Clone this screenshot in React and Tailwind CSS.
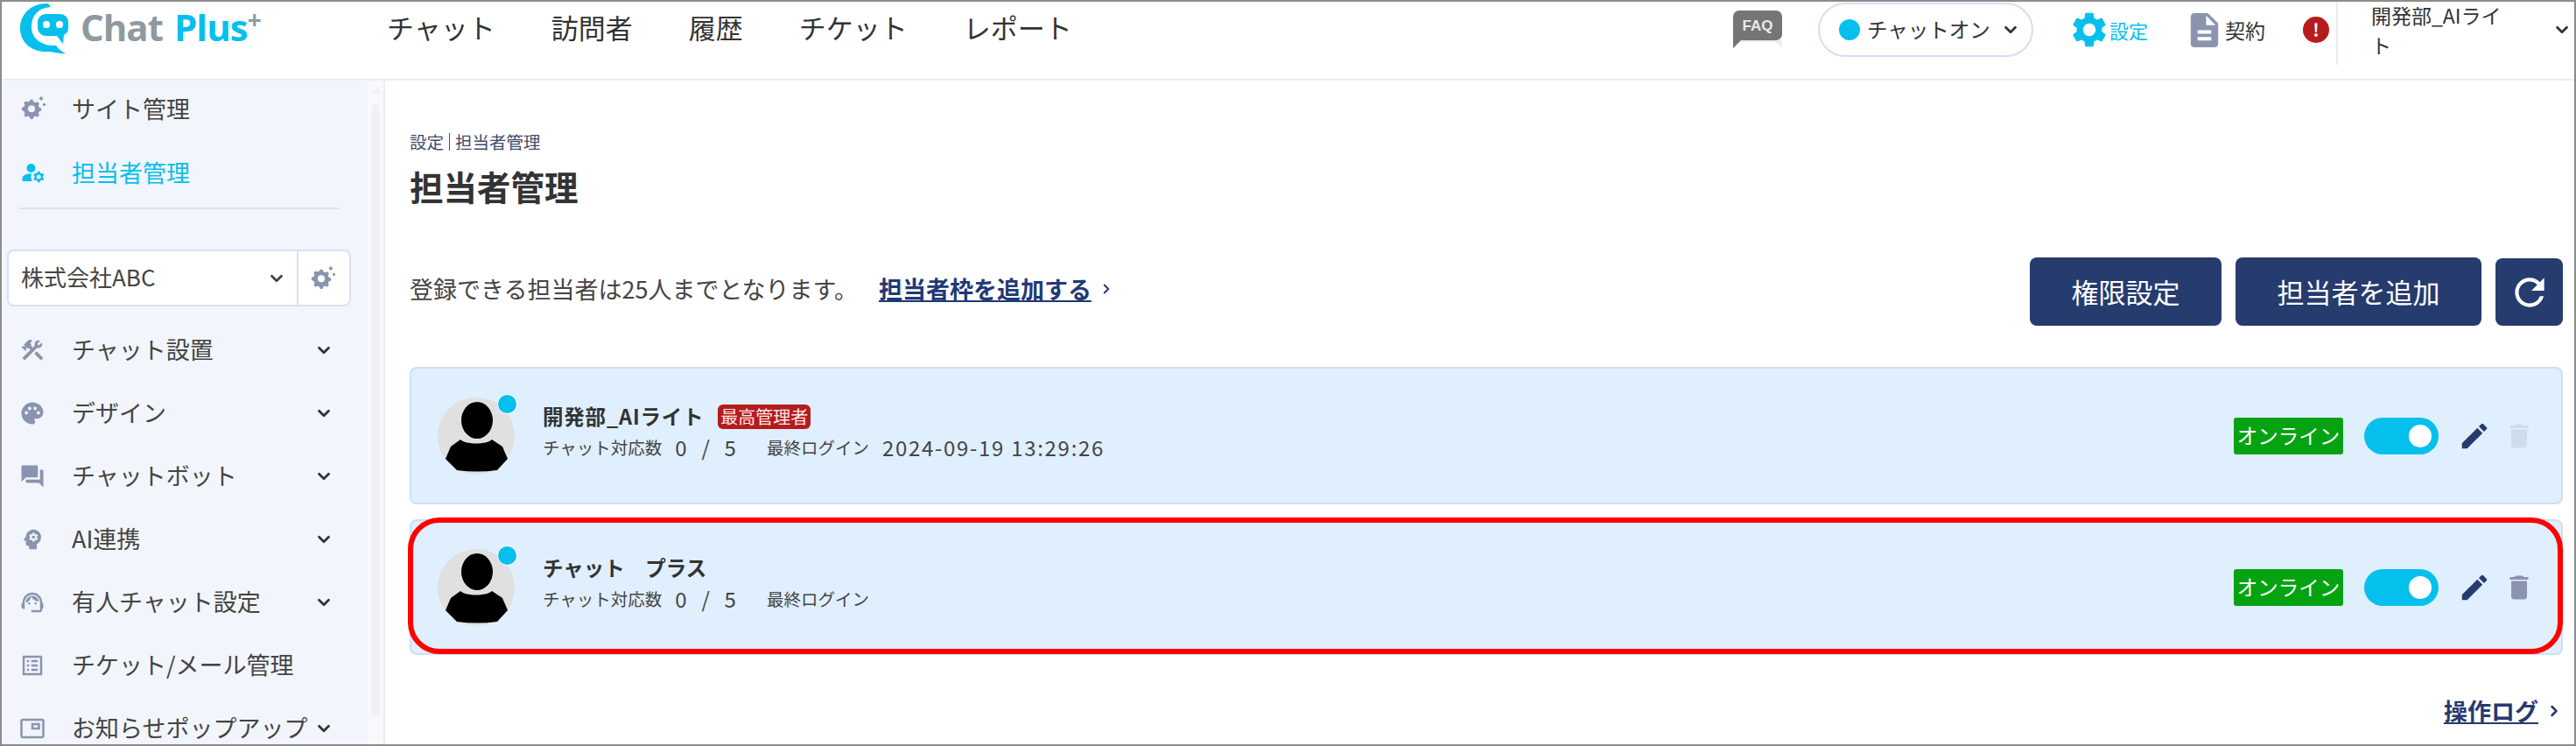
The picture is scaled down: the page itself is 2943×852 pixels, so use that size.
import { ChevronDown, ChevronRight } from 'lucide-react';
import {
  MdConstruction,
  MdPalette,
  MdForum,
  MdPsychology,
  MdSupportAgent,
  MdOutlineListAlt,
  MdOutlinePictureInPicture,
  MdManageAccounts,
  MdSettings,
  MdDescription,
  MdEdit,
  MdDelete,
  MdRefresh,
} from 'react-icons/md';

const NAV = ['チャット', '訪問者', '履歴', 'チケット', 'レポート'];

const MENU = [
  { label: 'チャット設置', Icon: MdConstruction, arrow: true },
  { label: 'デザイン', Icon: MdPalette, arrow: true },
  { label: 'チャットボット', Icon: MdForum, arrow: true },
  { label: 'AI連携', Icon: MdPsychology, arrow: true },
  { label: '有人チャット設定', Icon: MdSupportAgent, arrow: true },
  { label: 'チケット/メール管理', Icon: MdOutlineListAlt },
  { label: 'お知らせポップアップ', Icon: MdOutlinePictureInPicture, arrow: true },
];

function Logo() {
  return (
    <svg width="60" height="64" viewBox="0 0 60 64" className="shrink-0">
      <path
        d="M33 2C14 1 1 14 1 30c0 17 14 28 31 27 6 0 14 3 21 2-6-3-9-6-11-9-12 1-28-5-28-21C14 15 22 7 36 6Z"
        fill="#05c0ec"
      />
      <path d="M30 14h17a9 9 0 0 1 9 9v7a9 9 0 0 1-5 8l-1 10-7-9H30a9 9 0 0 1-9-9v-7a9 9 0 0 1 9-9Z" fill="#05c0ec" />
      <rect x="27" y="22" width="8" height="8" rx="3.5" fill="#fff" />
      <rect x="42" y="22" width="8" height="8" rx="3.5" fill="#fff" />
    </svg>
  );
}

function GearIcon({ className }) {
  return (
    <svg width="30" height="30" viewBox="0 0 30 30" className={className}>
      <g fill="#8a94b0">
        <path d="M11 6.500l2.600.4.8 2.400 2.300 1 2.200-1.100 2 2-1.100 2.200 1 2.300 2.400.8v2.900l-2.400.8-1 2.300 1.100 2.200-2 2-2.200-1.100-2.300 1-.8 2.400h-2.900l-.8-2.400-2.300-1-2.200 1.100-2-2 1.100-2.200-1-2.300L1 18.700v-2.900l2.400-.8 1-2.300L3.300 10.500l2-2 2.200 1.100 2.300-1Zm1 6.800a4 4 0 1 0 0 8 4 4 0 0 0 0-8Z" fillRule="evenodd" transform="translate(0 -2)" />
        <path d="M23 1l2.500 2.500L23 6l-2.500-2.500Z" />
        <path d="M26.500 8.500l2 2-2 2-2-2Z" />
      </g>
    </svg>
  );
}

function Avatar() {
  return (
    <div className="relative h-[88px] w-[88px] shrink-0 rounded-full bg-[#e0e0e0]">
      <svg width="88" height="88" viewBox="0 0 88 88">
        <ellipse cx="45" cy="26" rx="18" ry="21" fill="#000" />
        <path d="M26 48C32 54 56 54 62 48L74 56 80 70 68 83Q45 86 22 83L9 70 15 56Z" fill="#000" />
      </svg>
      <span className="absolute -top-[3px] left-[69px] h-[21px] w-[21px] rounded-full bg-[#05c0ec] ring-1 ring-white/70" />
    </div>
  );
}

function OperatorCard({ name, nameClass, badge, login, trashClass, height, highlight }) {
  return (
    <div className={`relative flex items-center rounded-lg border-2 border-[#cfdff0] bg-[#e0effd] pl-[30px] pr-[30px] ${height}`}>
      <Avatar />
      <div className="ml-[32px] -mt-[8px]">
        <div className="flex h-[35px] items-center text-[23.5px] font-bold text-[#333]">
          <span className={nameClass}>{name}</span>
          {badge && (
            <span className="ml-[16px] flex h-[28px] w-[106px] items-center justify-center rounded-md bg-[#b31d1d] text-[20px] font-normal text-[#fde8e8]">
              {badge}
            </span>
          )}
        </div>
        <div className="flex h-[35px] items-center text-[19.5px] text-[#444]">
          <span>チャット対応数</span>
          <span className="ml-[15px] text-[24px] tracking-[2px] whitespace-pre">0  /  5</span>
          <span className="ml-[33px]">最終ログイン</span>
          {login && <span className="ml-[15px] text-[24px] tracking-[1.7px]">{login}</span>}
        </div>
      </div>
      <div className="ml-auto flex items-center">
        <span className="flex h-[42px] w-[125px] items-center justify-center rounded-[3px] bg-[#05a312] text-[23.5px] text-white">
          オンライン
        </span>
        <span className="ml-[24px] flex h-[42px] w-[85px] items-center justify-end rounded-full bg-[#05c0ec] pr-[8px]">
          <span className="h-[26px] w-[26px] rounded-full bg-white" />
        </span>
        <MdEdit size={38} className="ml-[22px] text-[#263b6e]" />
        <MdDelete size={36} className={`ml-[14px] ${trashClass}`} />
      </div>
      {highlight && (
        <div className="pointer-events-none absolute -top-[4px] -bottom-[1px] -left-[4px] -right-[2px] rounded-[36px] border-[6px] border-[#fe0000]" />
      )}
    </div>
  );
}

export default function App() {
  return (
    <div className="h-[852px] w-[2943px] overflow-hidden border-2 border-[#8c8c8c] bg-white font-['Noto_Sans_CJK_JP','Noto_Sans_CJK_SC',sans-serif] text-[#333]">
      {/* Header */}
      <header className="h-[90px] border-b-2 border-[#e8edf6]">
        <div className="flex h-[64px] items-center">
          <div className="ml-[20px]">
            <Logo />
          </div>
          <div className="ml-[10px] -mt-[6px] flex w-[200px] shrink-0 items-start font-['Open_Sans',sans-serif] text-[42px] leading-none font-bold tracking-[-1px]">
            <span className="text-[#8e9aa0]">Chat</span>
            <span className="ml-[13px] text-[#05c0ec]">Plus</span>
            <span className="text-[28px] leading-[24px] text-[#8e9aa0]">+</span>
          </div>
          <nav className="ml-[150px] -mt-[5px] flex gap-[64px] text-[31px] text-[#333]">
            {NAV.map(n => (
              <span key={n}>{n}</span>
            ))}
          </nav>

          <div className="ml-auto flex items-center">
            <svg width="58" height="44" viewBox="0 0 58 44" className="shrink-0">
              <path d="M2 34L57 34 57 43 50 36 8 36 2 43Z" fill="#efeee6" />
              <path d="M8 0h42a7 7 0 0 1 7 7v20a7 7 0 0 1-7 7H10l-9 9V7a7 7 0 0 1 7-7Z" fill="#757575" />
              <text x="29" y="23" textAnchor="middle" fontSize="17" fontWeight="700" fill="#e8e8e8" fontFamily="Liberation Sans, sans-serif">FAQ</text>
            </svg>
            <div className="ml-[40px] flex h-[62px] w-[246px] items-center rounded-full border-2 border-[#d5dff0] pl-[22px] text-[23.5px]">
              <span className="h-[24px] w-[24px] rounded-full bg-[#05c0ec]" />
              <span className="ml-[8px]">チャットオン</span>
              <ChevronDown size={22} strokeWidth={3} className="ml-[12px]" />
            </div>
            <MdSettings size={48} className="ml-[40px] text-[#05c0ec]" />
            <span className="-ml-px text-[22px] text-[#05c0ec]">設定</span>
            <MdDescription size={47} className="ml-[41px] text-[#8a94b0]" />
            <span className="text-[23px]">契約</span>
            <span className="ml-[43px] flex h-[30px] w-[30px] items-center justify-center rounded-full bg-[#b71c1c] text-[20px] font-bold text-white">!</span>
            <div className="ml-[8px] flex h-[80px] w-[272px] items-center self-start border-l-2 border-[#e8edf6] pl-[38px]">
              <span className="w-[170px] text-[23px] leading-[34px]">
                開発部_AIライ
                <br />
                ト
              </span>
              <ChevronDown size={22} strokeWidth={3} className="ml-[37px] shrink-0" />
            </div>
          </div>
        </div>
      </header>

      <div className="flex h-[758px]">
        {/* Sidebar */}
        <aside className="w-[418px] shrink-0 overflow-hidden bg-[#f2f5fb] text-[27px] text-[#444]">
          <div className="flex h-[64px] items-center">
            <GearIcon className="ml-[22px]" />
            <span className="ml-[28px]">サイト管理</span>
          </div>
          <div className="mt-[9px] flex h-[64px] items-center text-[#05c0ec]">
            <MdManageAccounts size={30} className="ml-[21px]" />
            <span className="ml-[29px]">担当者管理</span>
          </div>
          <div className="ml-[20px] mt-[8px] h-[2px] w-[366px] bg-[#d9e1f0]" />

          <div className="ml-[6px] mt-[46px] flex h-[65px] w-[393px] items-center rounded-lg border-2 border-[#d9e1f0] bg-white text-[26px]">
            <span className="ml-[14px] -mt-[4px]">株式会社ABC</span>
            <ChevronDown size={22} strokeWidth={3} className="ml-auto mr-[12px]" />
            <div className="flex h-full w-[60px] items-center justify-center border-l-2 border-[#d9e1f0]">
              <GearIcon />
            </div>
          </div>

          <div className="mt-[14px]">
            {MENU.map(({ label, Icon, arrow }) => (
              <div key={label} className="flex h-[72px] items-center whitespace-nowrap">
                <Icon size={30} className="ml-[20px] shrink-0 text-[#8a94b0]" />
                <span className="ml-[30px] -mt-px">{label}</span>
                {arrow && <ChevronDown size={22} strokeWidth={3} className="ml-auto mr-[39px] shrink-0 text-[#333]" />}
              </div>
            ))}
          </div>
        </aside>

        {/* Scroll track */}
        <div className="w-[20px] shrink-0 border-r-2 border-[#e8edf6] bg-[#f7f9fd] px-[4px] pt-[6px]">
          <div className="mx-auto h-0 w-0 border-x-[6px] border-b-[9px] border-x-transparent border-b-[#eef1f7]" />
          <div className="mt-[12px] h-[700px] rounded-full bg-[#eef1f7]" />
        </div>

        {/* Main */}
        <main className="min-w-0 flex-1 pl-[28px] pr-[13px] pt-[56px]">
          <div className="flex h-[28px] items-center text-[19.5px] text-[#3f4c6b]">
            <span>設定</span>
            <span className="mx-[6px] h-[20px] w-px bg-[#3f4c6b]" />
            <span>担当者管理</span>
          </div>
          <h1 className="mt-[12px] flex h-[50px] items-center text-[38.5px] font-bold text-[#333]">担当者管理</h1>

          <div className="mt-[56px] flex h-[78px] items-center text-[27px] text-[#444]">
            <div className="-mt-[6px] flex items-center">
              <span>登録できる担当者は25人までとなります。</span>
              <a className="ml-[24px] font-bold text-[#1f3a75] underline">担当者枠を追加する</a>
              <ChevronRight size={18} strokeWidth={2.5} className="ml-[8px] text-[#1f3a75]" />
            </div>
            <div className="ml-auto flex h-full items-end gap-[16px] text-[31px] text-white">
              <button className="flex h-[78px] w-[219px] items-center justify-center rounded-lg bg-[#263b6e]">権限設定</button>
              <button className="flex h-[78px] w-[281px] items-center justify-center rounded-lg bg-[#263b6e]">担当者を追加</button>
              <button className="flex h-[77px] w-[77px] items-center justify-center rounded-lg bg-[#263b6e]">
                <MdRefresh size={50} />
              </button>
            </div>
          </div>

          <div className="mt-[47px] flex flex-col gap-[17px]">
            <OperatorCard
              name="開発部_AIライト"
              nameClass="tracking-[0.8px]"
              badge="最高管理者"
              login="2024-09-19 13:29:26"
              trashClass="text-[#cfdcec]"
              height="h-[157px]"
            />
            <OperatorCard
              name="チャット　プラス"
              trashClass="text-[#8a94b0]"
              height="h-[155px]"
              highlight
            />
          </div>

          <div className="mt-[44px] flex h-[40px] items-center justify-end text-[27px] font-bold text-[#263b6e]">
            <a className="underline">操作ログ</a>
            <ChevronRight size={20} strokeWidth={3} className="ml-[8px]" />
          </div>
        </main>
      </div>
    </div>
  );
}
